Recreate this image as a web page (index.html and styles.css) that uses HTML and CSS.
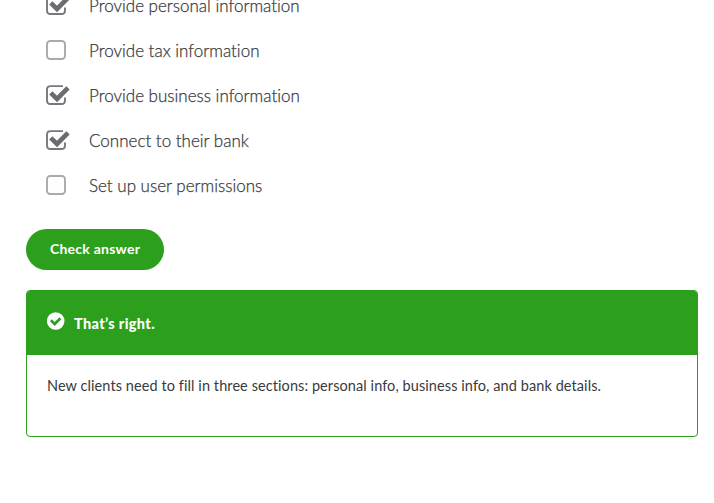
FILE: index.html
```html
<!DOCTYPE html>
<html lang="en">
<head>
<meta charset="utf-8">
<title>Knowledge check</title>
<link rel="stylesheet" href="styles.css">
</head>
<body>
<svg class="defs" aria-hidden="true">
  <symbol id="checked" viewBox="0 0 24 22">
    <path d="M17 2.1H4.5Q1 2.1 1 5.6V16.5Q1 20 4.5 20H15.5Q19 20 19 16.5V13.5" fill="none" stroke="#77787c" stroke-width="1.9"/>
    <path d="M4.8 8.8L11 14.9L22 3.9" fill="none" stroke="#6b6c72" stroke-width="4.6"/>
  </symbol>
  <symbol id="unchecked" viewBox="0 0 24 22">
    <rect x="1" y="2" width="18" height="18" rx="3.2" fill="none" stroke="#aaa9ab" stroke-width="1.9"/>
  </symbol>
</svg>
<main class="quiz">
  <ul class="options">
    <li class="option"><svg class="box"><use href="#checked"/></svg><span class="label">Provide personal information</span></li>
    <li class="option"><svg class="box"><use href="#unchecked"/></svg><span class="label">Provide tax information</span></li>
    <li class="option"><svg class="box"><use href="#checked"/></svg><span class="label">Provide business information</span></li>
    <li class="option"><svg class="box"><use href="#checked"/></svg><span class="label">Connect to their bank</span></li>
    <li class="option"><svg class="box"><use href="#unchecked"/></svg><span class="label">Set up user permissions</span></li>
  </ul>
  <button class="check-button" type="button">Check answer</button>
  <section class="feedback">
    <header class="feedback-head">
      <svg class="status" viewBox="0 0 18 18"><circle cx="8.7" cy="9" r="8.8" fill="#fff"/><path d="M3.9 8.2L7.7 12L13.4 6.2" fill="none" stroke="#2ca01c" stroke-width="2.7"/></svg>
      <span>That’s right.</span>
    </header>
    <p class="feedback-body">New clients need to fill in three sections: personal info, business info, and bank details.</p>
  </section>
</main>
</body>
</html>
```

FILE: styles.css
```css
* { box-sizing: border-box; }
body {
  margin: 0;
  height: 503px;
  overflow: hidden;
  background: #fff;
  color: #393a3d;
  font-family: Lato, "Open Sans", sans-serif;
  font-variant-ligatures: none;
}
.defs { display: none; }
.quiz { padding: 0 16px 0 26px; }
.options { list-style: none; margin: -18px 0 0; padding: 0 0 0 20px; }
.option {
  display: flex;
  align-items: center;
  gap: 19px;
  height: 45px;
  font-size: 17px;
  font-weight: 300;
  -webkit-text-stroke: 0.25px #393a3d;
  white-space: nowrap;
}
.label { padding-top: 2px; }
.box { width: 24px; height: 22px; flex: none; }
.check-button {
  display: block;
  width: 138px;
  height: 41px;
  margin: 22px 0 0;
  padding: 0 0 1px;
  border: 0;
  border-radius: 21px;
  background: #2ca01c;
  color: #fff;
  font: 700 14px/40px Lato, "Open Sans", sans-serif;
  letter-spacing: 0.25px;
}
.feedback {
  height: 147px;
  margin-top: 20px;
  border: 1px solid #2ca01c;
  border-radius: 4px;
}
.feedback-head {
  display: flex;
  align-items: center;
  gap: 9px;
  height: 64px;
  padding: 0 20px;
  border-radius: 3px 3px 0 0;
  background: #2ca01c;
  color: #fff;
  font-size: 14.5px;
  font-weight: 900;
  letter-spacing: 0.35px;
}
.status { width: 18px; height: 18px; margin-top: -4px; }
.feedback-body {
  margin: 0;
  padding: 21px 20px 19px;
  font-size: 14.5px;
  letter-spacing: 0.08px;
  line-height: 20px;
  white-space: nowrap;
}
```
